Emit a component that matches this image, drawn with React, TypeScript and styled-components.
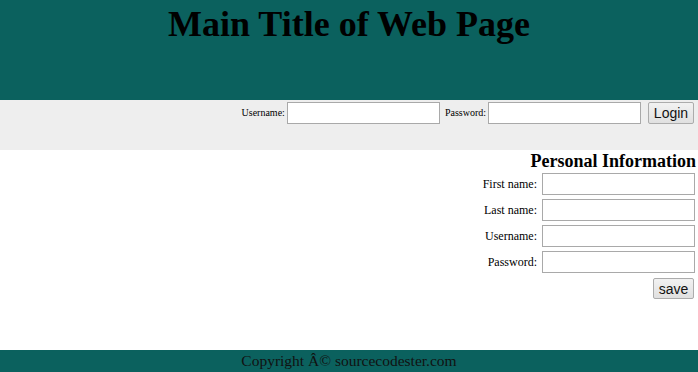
import React from "react";
import styled, { createGlobalStyle } from "styled-components";

const Global = createGlobalStyle`
  html, body { margin: 0; padding: 0; background: #ffffff; }
  body { font-family: "Liberation Serif", "Times New Roman", serif; color: #000; }
`;

const Page = styled.div`
  width: 698px;
  display: flex;
  flex-direction: column;
`;

const Header = styled.header`
  height: 100px;
  background: #0b615e;
  display: flex;
  justify-content: center;
  align-items: flex-start;
`;

const Title = styled.h1`
  margin: 0;
  padding-top: 3px;
  font-family: "Liberation Serif", "Times New Roman", serif;
  font-size: 36px;
  font-weight: bold;
  line-height: 42px;
  color: #000;
`;

const LoginBar = styled.div`
  height: 50px;
  background: #eeeeee;
  display: flex;
  justify-content: flex-end;
  align-items: flex-start;
  padding: 2px 4px 0 0;
  box-sizing: border-box;
`;

const SmallLabel = styled.label<{ $gap?: number }>`
  font-size: 10px;
  line-height: 22px;
  margin-left: ${(p) => p.$gap ?? 0}px;
  margin-right: 2px;
`;

const Input = styled.input`
  width: 153px;
  height: 22px;
  box-sizing: border-box;
  border: 1px solid #a9a9a9;
  background: #fff;
  padding: 1px 2px;
  margin: 0;
  font-family: "Liberation Sans", Arial, sans-serif;
  font-size: 13px;
`;

const Button = styled.button<{ $w: number; $h: number; $ml?: number }>`
  width: ${(p) => p.$w}px;
  height: ${(p) => p.$h}px;
  margin: 0 0 0 ${(p) => p.$ml ?? 0}px;
  padding: 0;
  box-sizing: border-box;
  border: 1px solid #acacac;
  border-radius: 2px;
  background: linear-gradient(#f2f2f2, #e0e0e0);
  font-family: "Liberation Sans", Arial, sans-serif;
  font-size: 14px;
  color: #111;
`;

const Main = styled.main`
  height: 200px;
  display: flex;
  flex-direction: column;
  align-items: flex-end;
  padding-right: 3px;
`;

const SectionTitle = styled.h3`
  margin: 0 -1px 0 0;
  font-size: 18px;
  font-weight: bold;
  line-height: 21px;
  padding-top: 1px;
`;

const Form = styled.div`
  display: grid;
  grid-template-columns: auto 153px;
  column-gap: 5px;
  row-gap: 4px;
  margin-top: 1px;
  justify-items: end;
`;

const FormLabel = styled.label`
  font-size: 12px;
  line-height: 22px;
`;

const SaveRow = styled.div`
  grid-column: 1 / 3;
  padding-top: 1px;
  padding-right: 1px;
`;

const Footer = styled.footer`
  height: 22px;
  background: #0b615e;
  display: flex;
  justify-content: center;
  align-items: center;
  font-size: 15.5px;
  color: #111;
`;

export default function App() {
  return (
    <>
      <Global />
      <Page>
        <Header>
          <Title>Main Title of Web Page</Title>
        </Header>
        <LoginBar>
          <SmallLabel>Username:</SmallLabel>
          <Input type="text" />
          <SmallLabel $gap={5}>Password:</SmallLabel>
          <Input type="password" />
          <Button $w={46} $h={22} $ml={7}>Login</Button>
        </LoginBar>
        <Main>
          <SectionTitle>Personal Information</SectionTitle>
          <Form>
            <FormLabel>First name:</FormLabel>
            <Input type="text" />
            <FormLabel>Last name:</FormLabel>
            <Input type="text" />
            <FormLabel>Username:</FormLabel>
            <Input type="text" />
            <FormLabel>Password:</FormLabel>
            <Input type="password" />
            <SaveRow>
              <Button $w={41} $h={21}>save</Button>
            </SaveRow>
          </Form>
        </Main>
        <Footer>Copyright Â© sourcecodester.com</Footer>
      </Page>
    </>
  );
}
